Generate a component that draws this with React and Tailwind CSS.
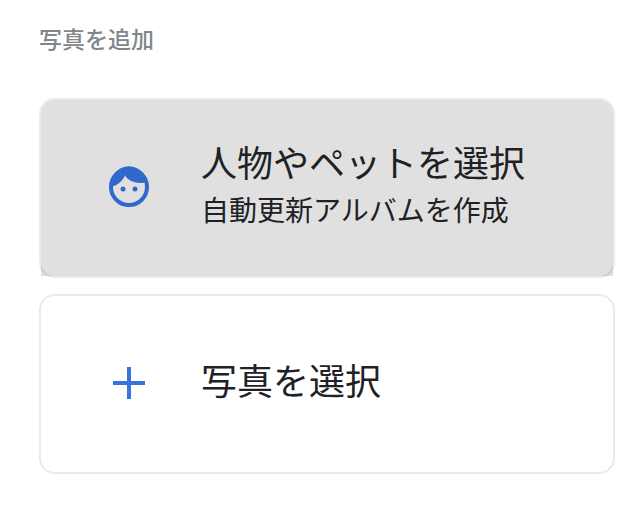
function FaceIcon() {
  return (
    <svg viewBox="0 0 48 48" className="size-12 shrink-0" aria-hidden="true">
      <circle cx="24" cy="24" r="18" fill="none" stroke="#3069cb" strokeWidth="4" />
      <path
        fill="#3069cb"
        d="M6 24 A18 18 0 0 1 42 19 L40 19.5 C32 21.2 23.8 18.6 20 12.6 C17.6 18 13.4 21.8 8 23.4 Z"
      />
      <circle cx="18" cy="26" r="2.5" fill="#3069cb" />
      <circle cx="30" cy="26" r="2.5" fill="#3069cb" />
    </svg>
  );
}

function PlusIcon() {
  return (
    <svg viewBox="0 0 48 48" className="size-12 shrink-0" aria-hidden="true">
      <path fill="#3874e0" d="M22 8h4v14h14v4H26v14h-4V26H8v-4h14z" />
    </svg>
  );
}

function OptionButton({ icon, title, subtitle, active }) {
  return (
    <button type="button" className="flex h-[180px] w-full rounded-2xl border-2 border-[#e8eaed] text-left">
      <span
        className={`flex w-full items-center gap-12 rounded-t-[14px] pr-6 pb-0.5 pl-16 ${active ? 'bg-black/12' : ''}`}
      >
        {icon}
        <span className="flex flex-col pb-2 text-[#202124]">
          <span className="text-4xl leading-[52px]">{title}</span>
          {subtitle && <span className="text-[28px] leading-[44px]">{subtitle}</span>}
        </span>
      </span>
    </button>
  );
}

export default function App() {
  return (
    <main className="bg-white pt-[22px] pr-[17px] pb-9 pl-[39px] font-['Noto_Sans_CJK_JP',sans-serif]">
      <h2 className="mb-11 text-[23px] leading-8 font-medium text-[#80868b]">写真を追加</h2>
      <div className="flex flex-col gap-4">
        <OptionButton icon={<FaceIcon />} title="人物やペットを選択" subtitle="自動更新アルバムを作成" active />
        <OptionButton icon={<PlusIcon />} title="写真を選択" />
      </div>
    </main>
  );
}
